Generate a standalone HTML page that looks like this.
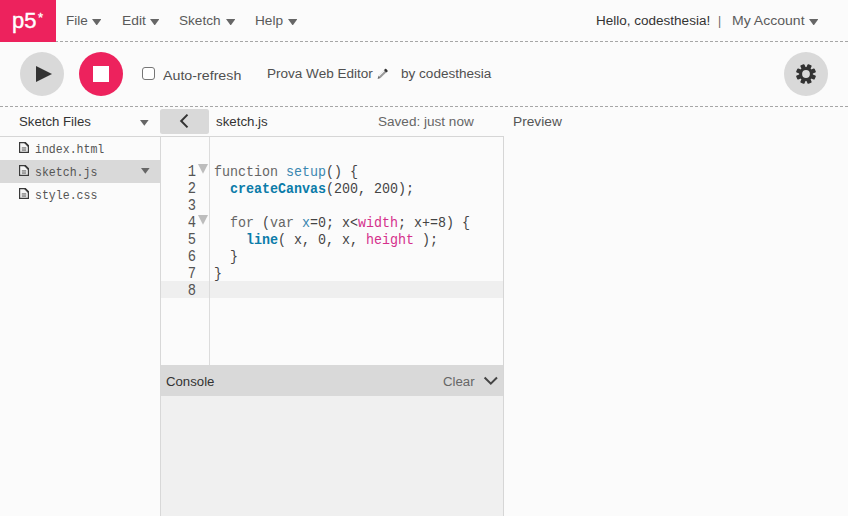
<!DOCTYPE html>
<html><head><meta charset="utf-8">
<style>
*{margin:0;padding:0;box-sizing:border-box}
html,body{width:848px;height:516px;overflow:hidden;background:#fbfbfb;font-family:"Liberation Sans",sans-serif;}
.a{position:absolute;white-space:pre;transform-origin:0 0}
.t{font-size:12px;line-height:12px;color:#333}
.dash{position:absolute;height:1px;background:repeating-linear-gradient(to right,#a6a6a6 0 3px,transparent 3px 5px)}
.tri{position:absolute;width:8.6px;height:5.8px;background:#666;clip-path:polygon(0 0,100% 0,50% 100%)}
.tn{width:9.4px;height:6.4px}
.mono{font-family:"Liberation Mono",monospace}
.code{position:absolute;left:214px;font-size:14px;line-height:17px;white-space:pre;color:#444;transform-origin:0 0;transform:scaleX(0.952)}
.ln{position:absolute;left:161px;width:35px;text-align:right;font-size:16px;line-height:17px;color:#555;transform-origin:100% 0;transform:scaleX(0.86)}
.kw{color:#666}
.df{color:#3a87b0}
.fn{color:#0b7ca9;font-weight:bold}
.pv{color:#d52f8c}
.fold{position:absolute;left:198px;width:10px;height:9.8px;background:#bdbdbd;clip-path:polygon(0 0,100% 0,50% 100%)}
</style></head><body>
<!-- nav -->
<div class="dash" style="left:0;top:41px;width:848px"></div>
<div class="a" style="left:0;top:0;width:56px;height:42px;background:#ed225d"></div>
<div class="a" style="left:12px;top:10px;font-size:22px;line-height:22px;color:#fff;-webkit-text-stroke:0.4px #fff">p5</div>
<div class="a" style="left:38px;top:12px;font-size:13px;line-height:12px;color:#fff;-webkit-text-stroke:0.3px #fff">*</div>

<div class="a t" style="left:66px;top:15px;color:#5a5a5a;transform:scaleX(1.128)">File</div><div class="tri tn" style="left:92px;top:19px"></div>
<div class="a t" style="left:122px;top:15px;color:#5a5a5a;transform:scaleX(1.15)">Edit</div><div class="tri tn" style="left:150px;top:19px"></div>
<div class="a t" style="left:179px;top:15px;color:#5a5a5a;transform:scaleX(1.133)">Sketch</div><div class="tri tn" style="left:226px;top:19px"></div>
<div class="a t" style="left:255px;top:15px;color:#5a5a5a;transform:scaleX(1.1375)">Help</div><div class="tri tn" style="left:288px;top:19px"></div>

<div class="a t" style="left:596px;top:15px;transform:scaleX(1.126)">Hello, codesthesia!</div>
<div class="a t" style="left:718px;top:15px;color:#666">|</div>
<div class="a t" style="left:732px;top:15px;color:#5a5a5a;transform:scaleX(1.17)">My Account</div><div class="tri tn" style="left:809px;top:19px"></div>

<!-- toolbar -->
<div class="a" style="left:20px;top:52px;width:44px;height:44px;border-radius:50%;background:#d9d9d9"></div>
<svg class="a" style="left:36px;top:66px" width="16" height="16"><path d="M0 0L16 8L0 16Z" fill="#333"/></svg>
<div class="a" style="left:79px;top:52px;width:44px;height:44px;border-radius:50%;background:#ed225d"></div>
<div class="a" style="left:93px;top:66px;width:16px;height:16px;background:#fff"></div>
<div class="a" style="left:142px;top:67px;width:13px;height:13px;border:1px solid #767676;border-radius:3px;background:#fff"></div>
<div class="a t" style="left:163px;top:70px;color:#505050;transform:scaleX(1.186)">Auto-refresh</div>
<div class="a t" style="left:267px;top:68px;color:#505050;transform:scaleX(1.128)">Prova Web Editor</div>
<svg class="a" style="left:375px;top:67px" width="15" height="14"><g transform="rotate(-45 7.5 7)">
<rect x="3.2" y="5.5" width="8.3" height="3" fill="#9a9a9a"/>
<rect x="3.2" y="5.5" width="8.3" height="0.9" fill="#fff"/>
<path d="M3.2 5.5L0.6 7L3.2 8.5Z" fill="#6a6a6a"/>
<rect x="11.2" y="5.2" width="2.4" height="3.6" rx="1" fill="#333"/>
</g></svg>
<div class="a t" style="left:401px;top:68px;color:#505050;transform:scaleX(1.129)">by codesthesia</div>
<div class="a" style="left:784px;top:52px;width:44px;height:44px;border-radius:50%;background:#d9d9d9"></div>
<svg class="a" style="left:796px;top:64px" width="20" height="20" viewBox="-10 -10 20 20">
<g fill="#333">
<circle r="6.9"/>
<rect x="-2.2" y="-10" width="4.4" height="20" rx="0.9" transform="rotate(22.5)"/>
<rect x="-2.2" y="-10" width="4.4" height="20" rx="0.9" transform="rotate(67.5)"/>
<rect x="-2.2" y="-10" width="4.4" height="20" rx="0.9" transform="rotate(112.5)"/>
<rect x="-2.2" y="-10" width="4.4" height="20" rx="0.9" transform="rotate(157.5)"/>
</g>
<circle r="3.9" fill="#d9d9d9"/>
</svg>
<div class="dash" style="left:0;top:106px;width:848px"></div>

<!-- sidebar header -->
<div class="a t" style="left:19px;top:116px;transform:scaleX(1.1)">Sketch Files</div>
<div class="tri" style="left:140px;top:120px"></div>
<div class="a" style="left:160px;top:109px;width:49px;height:25px;border-radius:2.5px;background:#d9d9d9"></div>
<svg class="a" style="left:178px;top:113px" width="12" height="16"><path d="M9.5 1.6L3.2 8L9.5 14.4" fill="none" stroke="#333" stroke-width="2"/></svg>
<div class="a t" style="left:216px;top:116px;transform:scaleX(1.108)">sketch.js</div>
<div class="a t" style="left:378px;top:116px;color:#666;transform:scaleX(1.13)">Saved: just now</div>
<div class="a t" style="left:513px;top:116px;color:#555;transform:scaleX(1.143)">Preview</div>

<div class="a" style="left:0;top:136px;width:504px;height:1px;background:#d6d6d6"></div>
<div class="a" style="left:160px;top:136px;width:1px;height:380px;background:#d8d8d8"></div>
<div class="a" style="left:503px;top:136px;width:1px;height:380px;background:#d6d6d6"></div>

<!-- files -->
<div class="a" style="left:0;top:160px;width:160px;height:23px;background:#d9d9d9"></div>
<svg class="a" style="left:19px;top:142px" width="10" height="11"><path d="M0.6 0.6H6.2L9.4 3.8V10.4H0.6Z" fill="#f4f4f4" stroke="#3a3a3a" stroke-width="1.2" stroke-linejoin="miter"/><path d="M5.6 0.6L9.4 4.4L9.4 3.8L6.2 0.6Z" fill="#3a3a3a" stroke="#3a3a3a" stroke-width="1.3"/><rect x="2.8" y="5" width="4.4" height="4" fill="#9c9c9c"/><rect x="2.8" y="6.6" width="4.4" height="0.6" fill="#c8c8c8"/></svg>
<svg class="a" style="left:19px;top:165px" width="10" height="11"><path d="M0.6 0.6H6.2L9.4 3.8V10.4H0.6Z" fill="#f4f4f4" stroke="#3a3a3a" stroke-width="1.2" stroke-linejoin="miter"/><path d="M5.6 0.6L9.4 4.4L9.4 3.8L6.2 0.6Z" fill="#3a3a3a" stroke="#3a3a3a" stroke-width="1.3"/><rect x="2.8" y="5" width="4.4" height="4" fill="#9c9c9c"/><rect x="2.8" y="6.6" width="4.4" height="0.6" fill="#c8c8c8"/></svg>
<svg class="a" style="left:19px;top:188px" width="10" height="11"><path d="M0.6 0.6H6.2L9.4 3.8V10.4H0.6Z" fill="#f4f4f4" stroke="#3a3a3a" stroke-width="1.2" stroke-linejoin="miter"/><path d="M5.6 0.6L9.4 4.4L9.4 3.8L6.2 0.6Z" fill="#3a3a3a" stroke="#3a3a3a" stroke-width="1.3"/><rect x="2.8" y="5" width="4.4" height="4" fill="#9c9c9c"/><rect x="2.8" y="6.6" width="4.4" height="0.6" fill="#c8c8c8"/></svg>
<div class="a mono" style="left:35px;top:143px;font-size:13.5px;line-height:14px;color:#555;transform:scaleX(0.855)">index.html</div>
<div class="a mono" style="left:35px;top:166px;font-size:13.5px;line-height:14px;color:#555;transform:scaleX(0.855)">sketch.js</div>
<div class="a mono" style="left:35px;top:189px;font-size:13.5px;line-height:14px;color:#555;transform:scaleX(0.855)">style.css</div>
<div class="tri" style="left:141px;top:168px"></div>

<!-- editor -->
<div class="a" style="left:161px;top:281px;width:342px;height:17px;background:#efefef"></div>
<div class="a" style="left:209px;top:137px;width:1px;height:228px;background:#dcdcdc"></div>
<div class="ln mono" style="top:164px">1</div>
<div class="ln mono" style="top:181px">2</div>
<div class="ln mono" style="top:198px">3</div>
<div class="ln mono" style="top:215px">4</div>
<div class="ln mono" style="top:232px">5</div>
<div class="ln mono" style="top:249px">6</div>
<div class="ln mono" style="top:266px">7</div>
<div class="ln mono" style="top:283px">8</div>
<div class="fold" style="top:164px"></div>
<div class="fold" style="top:215px"></div>
<div class="code mono" style="top:164px"><span class="kw">function</span> <span class="df">setup</span>() {</div>
<div class="code mono" style="top:181px">  <span class="fn">createCanvas</span>(200, 200);</div>
<div class="code mono" style="top:215px">  <span class="kw">for</span> (<span class="kw">var</span> <span class="df">x</span>=0; x&lt;<span class="pv">width</span>; x+=8) {</div>
<div class="code mono" style="top:232px">    <span class="fn">line</span>( x, 0, x, <span class="pv">height</span> );</div>
<div class="code mono" style="top:249px">  }</div>
<div class="code mono" style="top:266px">}</div>

<!-- console -->
<div class="a" style="left:161px;top:365px;width:342px;height:31px;background:#d9d9d9"></div>
<div class="a t" style="left:166px;top:376px;transform:scaleX(1.1)">Console</div>
<div class="a t" style="left:443px;top:376px;color:#666;transform:scaleX(1.1)">Clear</div>
<svg class="a" style="left:483px;top:376px" width="16" height="11"><path d="M1.6 1.5L7.8 7.7L14 1.5" fill="none" stroke="#444" stroke-width="2"/></svg>
<div class="a" style="left:161px;top:396px;width:342px;height:120px;background:#f0f0f0"></div>
</body></html>
